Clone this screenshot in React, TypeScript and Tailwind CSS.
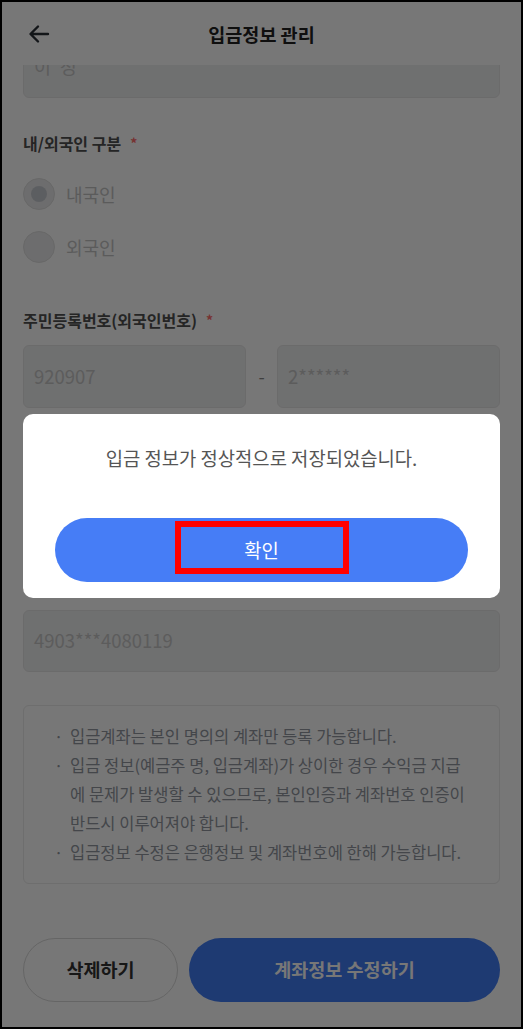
import React from 'react';

const font = { fontFamily: '"Noto Sans CJK KR", "Noto Sans", sans-serif' };

function Field({ value, className = '' }: { value: string; className?: string }) {
  return (
    <div className={`flex h-[62px] items-center rounded-[6px] border border-[#e6e6e6] bg-[#eeeff0] px-[10px] text-[18.5px] text-[#c6c6c6] ${className}`}>
      {value}
    </div>
  );
}

function Label({ children }: { children: React.ReactNode }) {
  return (
    <div className="flex items-center text-[16px] font-bold leading-[22px] text-[#4f4f4f]">
      {children}
      <span className="ml-[9px] text-[14px] text-[#ff6b6b]">*</span>
    </div>
  );
}

function Radio({ label, checked }: { label: string; checked?: boolean }) {
  return (
    <div className="flex h-[32px] items-center gap-[11px]">
      <div className="flex h-[32px] w-[32px] items-center justify-center rounded-full border border-[#dedede] bg-[#eaeaeb]">
        {checked && <div className="h-[16px] w-[16px] rounded-full bg-[#c6cad0]" />}
      </div>
      <span className="text-[18px] text-[#c4c4c4]">{label}</span>
    </div>
  );
}

export default function App() {
  return (
    <div style={font} className="relative h-[1029px] w-[523px] overflow-hidden border-2 border-black bg-white">
      {/* Header */}
      <div className="relative z-10 flex h-[63px] items-center bg-white px-[25px]">
        <svg width="24" height="24" viewBox="0 0 24 24" fill="none">
          <path d="M21 12H4M11 4.5L3.5 12L11 19.5" stroke="#2a2f36" strokeWidth="2.4" strokeLinecap="round" strokeLinejoin="round" />
        </svg>
        <div className="flex-1 pr-[24px] pt-[2px] text-center text-[18.5px] font-bold text-[#222]">입금정보 관리</div>
      </div>

      {/* Form */}
      <div className="flex h-[962px] flex-col overflow-hidden px-[21px]">
        <Field value="이*정" className="-mt-[29px] shrink-0" />

        <div className="mt-[34px]"><Label>내/외국인 구분</Label></div>
        <div className="mt-[24px] flex flex-col gap-[21px]">
          <Radio label="내국인" checked />
          <Radio label="외국인" />
        </div>

        <div className="mt-[46px]"><Label>주민등록번호(외국인번호)</Label></div>
        <div className="mt-[14px] flex items-center">
          <Field value="920907" className="w-[223px] h-[63px]" />
          <span className="w-[31px] text-center text-[18px] text-[#888]">-</span>
          <Field value="2******" className="flex-1 h-[63px]" />
        </div>

        <div className="mt-[46px]"><Label>은행</Label></div>
        <Field value="우리은행" className="mt-[14px] shrink-0" />
        <div className="mt-[22px]"><Label>계좌번호</Label></div>
        <Field value="4903***4080119" className="mt-[14px] shrink-0" />

        <div className="mt-[33px] rounded-[6px] border border-[#ebebeb] py-[16px] pl-[30px] pr-[32px] text-[16.5px] leading-[29px] text-[#92979f]">
          <ul className="flex flex-col">
            <li className="flex"><span className="w-[16px] shrink-0">·</span><span>입금계좌는 본인 명의의 계좌만 등록 가능합니다.</span></li>
            <li className="flex"><span className="w-[16px] shrink-0">·</span><span>입금 정보(예금주 명, 입금계좌)가 상이한 경우 수익금 지급에 문제가 발생할 수 있으므로, 본인인증과 계좌번호 인증이 반드시 이루어져야 합니다.</span></li>
            <li className="flex"><span className="w-[16px] shrink-0">·</span><span>입금정보 수정은 은행정보 및 계좌번호에 한해 가능합니다.</span></li>
          </ul>
        </div>

        <div className="mt-[54px] flex gap-[11px]">
          <button className="h-[64px] w-[155px] rounded-full border border-[#d9d9d9] bg-white text-[18.5px] font-bold text-[#333]">삭제하기</button>
          <button className="h-[64px] flex-1 rounded-full bg-[#417cf5] text-[18.5px] font-bold text-white">계좌정보 수정하기</button>
        </div>
      </div>

      {/* Dim overlay + alert */}
      <div className="absolute inset-0 z-20 bg-black/[0.533] px-[21px] pt-[412px]">
        <div className="rounded-[10px] bg-white px-[32px] pb-[16px] pt-[31px]">
          <p className="text-center text-[18.8px] leading-[26px] text-[#555]">입금 정보가 정상적으로 저장되었습니다.</p>
          <button className="relative mt-[47px] flex h-[64px] w-full items-center justify-center rounded-full bg-[#467df6] text-[18.8px] text-white">
            확인
            <span className="absolute left-[120px] top-[3px] h-[53px] w-[174px] border-[6px] border-[#ff0000]" />
          </button>
        </div>
      </div>
    </div>
  );
}
